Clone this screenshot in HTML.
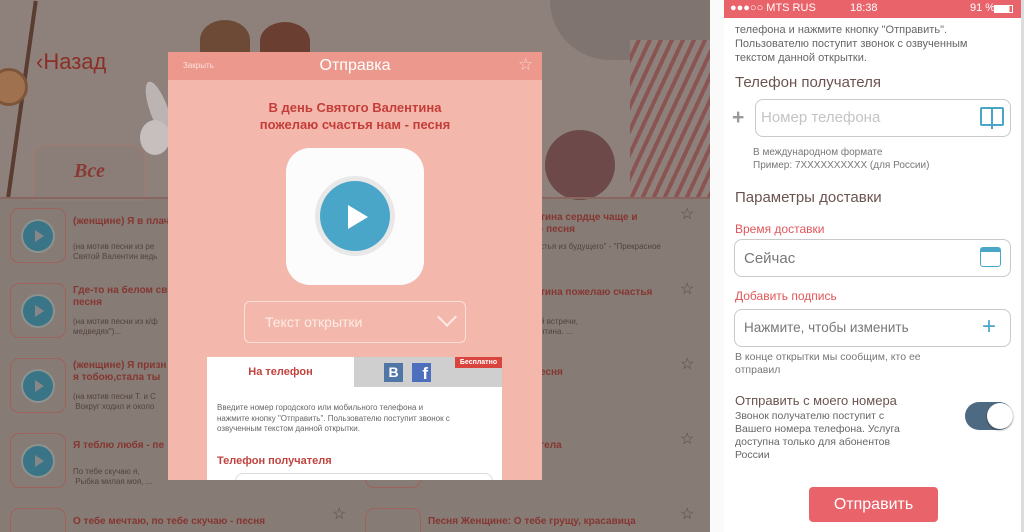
<!DOCTYPE html>
<html><head><meta charset="utf-8"><style>
*{margin:0;padding:0;box-sizing:border-box}
html,body{width:1024px;height:532px;overflow:hidden}
body{background:#fff;font-family:"Liberation Sans",sans-serif;position:relative}
.a{position:absolute}
.left{left:0;top:0;width:710px;height:532px;background:#877b75;overflow:hidden}
.tl{color:#853631;font-weight:bold;font-size:10px;line-height:12px}
.ds{color:#52433d;font-size:8px;line-height:10px}
.box{width:56px;height:55px;border:1px solid #9c635a;border-radius:9px}
.pc{width:30px;height:30px;border-radius:50%;background:#3a7487;left:12px;top:12px;box-shadow:0 0 0 2px #8c938f}
.pc:after{content:"";position:absolute;left:12px;top:9px;border-left:9px solid #878787;border-top:6px solid transparent;border-bottom:6px solid transparent}
.star{color:#5a4c47;font-size:16px}
.modal{left:168px;top:52px;width:374px;height:428px;background:#f3b8ab;overflow:hidden}
.right{left:724px;top:0;width:297px;height:532px;background:#fff;overflow:hidden}
.inp{border:1px solid #c9c9c9;border-radius:8px;background:#fff}
</style></head><body>
<div class="a left">
 <div class="a" style="left:0;top:0;width:710px;height:198px;background:#8e817b"></div>
 <div class="a" style="left:20px;top:0;width:4px;height:198px;background:#5a3c30;transform:rotate(8deg)"></div>
 <div class="a" style="left:-10px;top:68px;width:38px;height:38px;border-radius:50%;background:#a0714f;border:3px solid #7d5639"></div>
 <div class="a" style="left:200px;top:20px;width:50px;height:40px;border-radius:50% 50% 0 0;background:#6c4a35"></div>
 <div class="a" style="left:260px;top:22px;width:50px;height:38px;border-radius:50% 50% 0 0;background:#6a3e30"></div>
 <div class="a" style="left:150px;top:80px;width:18px;height:60px;border-radius:50%;background:#bcb4b2;transform:rotate(-20deg)"></div>
 <div class="a" style="left:140px;top:120px;width:30px;height:35px;border-radius:50%;background:#c6bfbd"></div>
 <div class="a" style="left:550px;top:0;width:160px;height:60px;border-radius:0 0 0 80px;background:#7f7470"></div>
 <div class="a" style="left:545px;top:130px;width:70px;height:70px;border-radius:50%;background:#6d4a49"></div>
 <div class="a" style="left:630px;top:40px;width:80px;height:158px;background:repeating-linear-gradient(115deg,#8e817b 0 6px,#8a5452 6px 10px)"></div>
 <div class="a" style="left:36px;top:49px;color:#8a2f25;font-size:22px;">‹Назад</div>
 <div class="a" style="left:33px;top:145px;width:112px;height:56px;border:1px solid #a3786d;border-bottom:none;border-radius:14px 14px 0 0;background:#8b7e78"></div>
 <div class="a" style="left:74px;top:160px;color:#8a3a34;font:italic bold 20px 'Liberation Serif',serif">Все</div>
 <div class="a" style="left:0;top:197px;width:710px;height:2px;background:#8a6661"></div>
 <div class="a box" style="left:10px;top:208px"><div class="a pc"></div></div>
 <div class="a tl" style="left:73px;top:216px">(женщине) Я в плачу</div>
 <div class="a ds" style="left:73px;top:242px">(на мотив песни из ре<br>Святой Валентин ведь</div>
 <div class="a box" style="left:10px;top:283px"><div class="a pc"></div></div>
 <div class="a tl" style="left:73px;top:285px">Где-то на белом св<br>песня</div>
 <div class="a ds" style="left:73px;top:317px">(на мотив песни из к/ф<br>медведях")...</div>
 <div class="a box" style="left:10px;top:358px"><div class="a pc"></div></div>
 <div class="a tl" style="left:73px;top:360px">(женщине) Я призн<br>я тобою,стала ты</div>
 <div class="a ds" style="left:73px;top:392px">(на мотив песни Т. и С<br>&nbsp;Вокруг ходил и около</div>
 <div class="a box" style="left:10px;top:433px"><div class="a pc"></div></div>
 <div class="a tl" style="left:73px;top:440px">Я теблю любя - пе</div>
 <div class="a ds" style="left:73px;top:467px">По тебе скучаю я,<br>&nbsp;Рыбка милая моя, ...</div>
 <div class="a box" style="left:10px;top:508px;height:24px;border-bottom:none;border-radius:9px 9px 0 0"></div>
 <div class="a tl" style="left:73px;top:516px">О тебе мечтаю, по тебе скучаю - песня</div>
 <div class="a tl" style="left:540px;top:212px">тина сердце чаще и<br>- песня</div>
 <div class="a ds" style="left:540px;top:242px">стья из будущего" - "Прекрасное</div>
 <div class="a tl" style="left:540px;top:287px">тина пожелаю счастья</div>
 <div class="a ds" style="left:540px;top:317px">й встречи,<br>нтина. ...</div>
 <div class="a tl" style="left:540px;top:367px">есня</div>
 <div class="a tl" style="left:540px;top:440px">гела</div>
 <div class="a box" style="left:365px;top:433px"></div>
 <div class="a ds" style="left:430px;top:470px">Почему ты не веришь мне?...</div>
 <div class="a box" style="left:365px;top:508px;height:24px;border-bottom:none;border-radius:9px 9px 0 0"></div>
 <div class="a tl" style="left:428px;top:516px">Песня Женщине: О тебе грущу, красавица</div>
 <div class="a star" style="left:680px;top:204px">☆</div>
 <div class="a star" style="left:680px;top:279px">☆</div>
 <div class="a star" style="left:680px;top:354px">☆</div>
 <div class="a star" style="left:680px;top:429px">☆</div>
 <div class="a star" style="left:680px;top:504px">☆</div>
 <div class="a star" style="left:332px;top:504px">☆</div>
</div>

<div class="a modal">
 <div class="a" style="left:0;top:0;width:374px;height:28px;background:#ec988c"></div>
 <div class="a" style="left:15px;top:9px;color:#fbe2dd;font-size:8px">Закрыть</div>
 <div class="a" style="left:0;top:5px;width:374px;text-align:center;color:#fff;font-size:16px">Отправка</div>
 <div class="a" style="left:350px;top:3px;color:#f7d3cc;font-size:17px">☆</div>
 <div class="a" style="left:0;top:47px;width:374px;text-align:center;color:#c43d3a;font-weight:bold;font-size:13px;line-height:17px">В день Святого Валентина<br>пожелаю счастья нам - песня</div>
 <div class="a" style="left:118px;top:96px;width:138px;height:137px;background:#fcfcfc;border-radius:24px"></div>
 <div class="a" style="left:147px;top:124px;width:80px;height:80px;border-radius:50%;background:#e8e8e8"></div>
 <div class="a" style="left:152px;top:129px;width:70px;height:70px;border-radius:50%;background:#4aa6c8"></div>
 <div class="a" style="left:180px;top:153px;border-left:20px solid #fff;border-top:12px solid transparent;border-bottom:12px solid transparent"></div>
 <div class="a" style="left:76px;top:249px;width:222px;height:42px;border:1px solid #fbe0da;border-radius:6px"></div>
 <div class="a" style="left:97px;top:262px;color:#fdebe7;font-size:14px">Текст открытки</div>
 <div class="a" style="left:272px;top:258px;width:14px;height:14px;border-right:2px solid #fdebe7;border-bottom:2px solid #fdebe7;transform:rotate(45deg)"></div>
 <div class="a" style="left:39px;top:305px;width:295px;height:130px;background:#fff"></div>
 <div class="a" style="left:186px;top:305px;width:148px;height:30px;background:#cfcfcf"></div>
 <div class="a" style="left:287px;top:305px;width:47px;height:11px;background:#d9443e;color:#fff;font-size:7px;font-weight:bold;text-align:center;line-height:11px">Бесплатно</div>
 <div class="a" style="left:216px;top:311px;width:19px;height:19px;background:#4f76a5;color:#fff;font-weight:bold;font-size:14px;text-align:center;line-height:19px">B</div>
 <div class="a" style="left:244px;top:311px;width:19px;height:19px;background:#4e6fbd;color:#fff;font-weight:bold;font-size:17px;text-align:right;line-height:22px;padding-right:3px">f</div>
 <div class="a" style="left:39px;top:314px;width:147px;text-align:center;color:#c0433e;font-weight:bold;font-size:11px">На телефон</div>
 <div class="a" style="left:49px;top:351px;color:#666;font-size:8px;line-height:10.5px">Введите номер городского или мобильного телефона и<br>нажмите кнопку "Отправить". Пользователю поступит звонок с<br>озвученным текстом данной открытки.</div>
 <div class="a" style="left:49px;top:403px;color:#c0433e;font-weight:bold;font-size:11px">Телефон получателя</div>
 <div class="a" style="left:67px;top:421px;width:258px;height:20px;border:1px solid #ddd;border-radius:8px"></div>
</div>

<div class="a" style="left:710px;top:0;width:14px;height:532px;background:#fafafa"></div>
<div class="a right">
 <div class="a" style="left:0;top:0;width:297px;height:18px;background:#e9636a"></div>
 <div class="a" style="left:6px;top:2px;color:#fff;font-size:11px">●●●○○ MTS RUS</div>
 <div class="a" style="left:126px;top:2px;color:#fff;font-size:11px">18:38</div>
 <div class="a" style="left:246px;top:2px;color:#fff;font-size:11px">91 %</div>
 <div class="a" style="left:270px;top:5px;width:19px;height:8px;border:1px solid #fff;background:linear-gradient(90deg,#fff 85%,transparent 0)"></div>
 <div class="a" style="left:11px;top:23px;color:#666;font-size:11px;line-height:14px">телефона и нажмите кнопку "Отправить".<br>Пользователю поступит звонок с озвученным<br>текстом данной открытки.</div>
 <div class="a" style="left:11px;top:74px;color:#6b5450;font-size:15px">Телефон получателя</div>
 <div class="a" style="left:8px;top:106px;color:#999;font-size:21px;font-weight:bold">+</div>
 <div class="a inp" style="left:31px;top:99px;width:256px;height:38px"></div>
 <div class="a" style="left:37px;top:109px;color:#c4c4c4;font-size:15px">Номер телефона</div>
 <div class="a" style="left:256px;top:107px;width:24px;height:19px;border:2px solid #4aa6c8;border-radius:2px"></div>
 <div class="a" style="left:267px;top:107px;width:2px;height:22px;background:#4aa6c8"></div>
 <div class="a" style="left:29px;top:146px;color:#777;font-size:10px;line-height:13px">В международном формате<br>Пример: 7XXXXXXXXXX (для России)</div>
 <div class="a" style="left:11px;top:189px;color:#6b5450;font-size:15px">Параметры доставки</div>
 <div class="a" style="left:11px;top:222px;color:#e0565a;font-size:12px">Время доставки</div>
 <div class="a inp" style="left:10px;top:239px;width:277px;height:38px"></div>
 <div class="a" style="left:20px;top:250px;color:#777;font-size:15px">Сейчас</div>
 <div class="a" style="left:256px;top:247px;width:21px;height:20px;border:1.5px solid #4aa6c8;border-top:5px solid #4aa6c8;border-radius:3px"></div>
 <div class="a" style="left:11px;top:289px;color:#e0565a;font-size:12px">Добавить подпись</div>
 <div class="a inp" style="left:10px;top:309px;width:277px;height:38px"></div>
 <div class="a" style="left:20px;top:320px;color:#777;font-size:13.5px">Нажмите, чтобы изменить</div>
 <div class="a" style="left:258px;top:314px;color:#4aa6c8;font-size:24px;line-height:26px">+</div>
 <div class="a" style="left:11px;top:351px;color:#777;font-size:10.5px;line-height:13px">В конце открытки мы сообщим, кто ее<br>отправил</div>
 <div class="a" style="left:11px;top:393px;color:#6b5450;font-size:13px">Отправить с моего номера</div>
 <div class="a" style="left:11px;top:410px;color:#666;font-size:10.5px;line-height:13px">Звонок получателю поступит с<br>Вашего номера телефона. Услуга<br>доступна только для абонентов<br>России</div>
 <div class="a" style="left:241px;top:402px;width:48px;height:28px;border-radius:14px;background:#4e6a82"></div>
 <div class="a" style="left:263px;top:403px;width:26px;height:26px;border-radius:50%;background:#fff;box-shadow:0 1px 2px rgba(0,0,0,.4)"></div>
 <div class="a" style="left:85px;top:487px;width:129px;height:35px;border-radius:4px;background:#e8646a;color:#fff;font-size:16px;text-align:center;line-height:35px">Отправить</div>
</div>
<div class="a" style="left:1021px;top:0;width:3px;height:532px;background:#ddd"></div>
</body></html>
